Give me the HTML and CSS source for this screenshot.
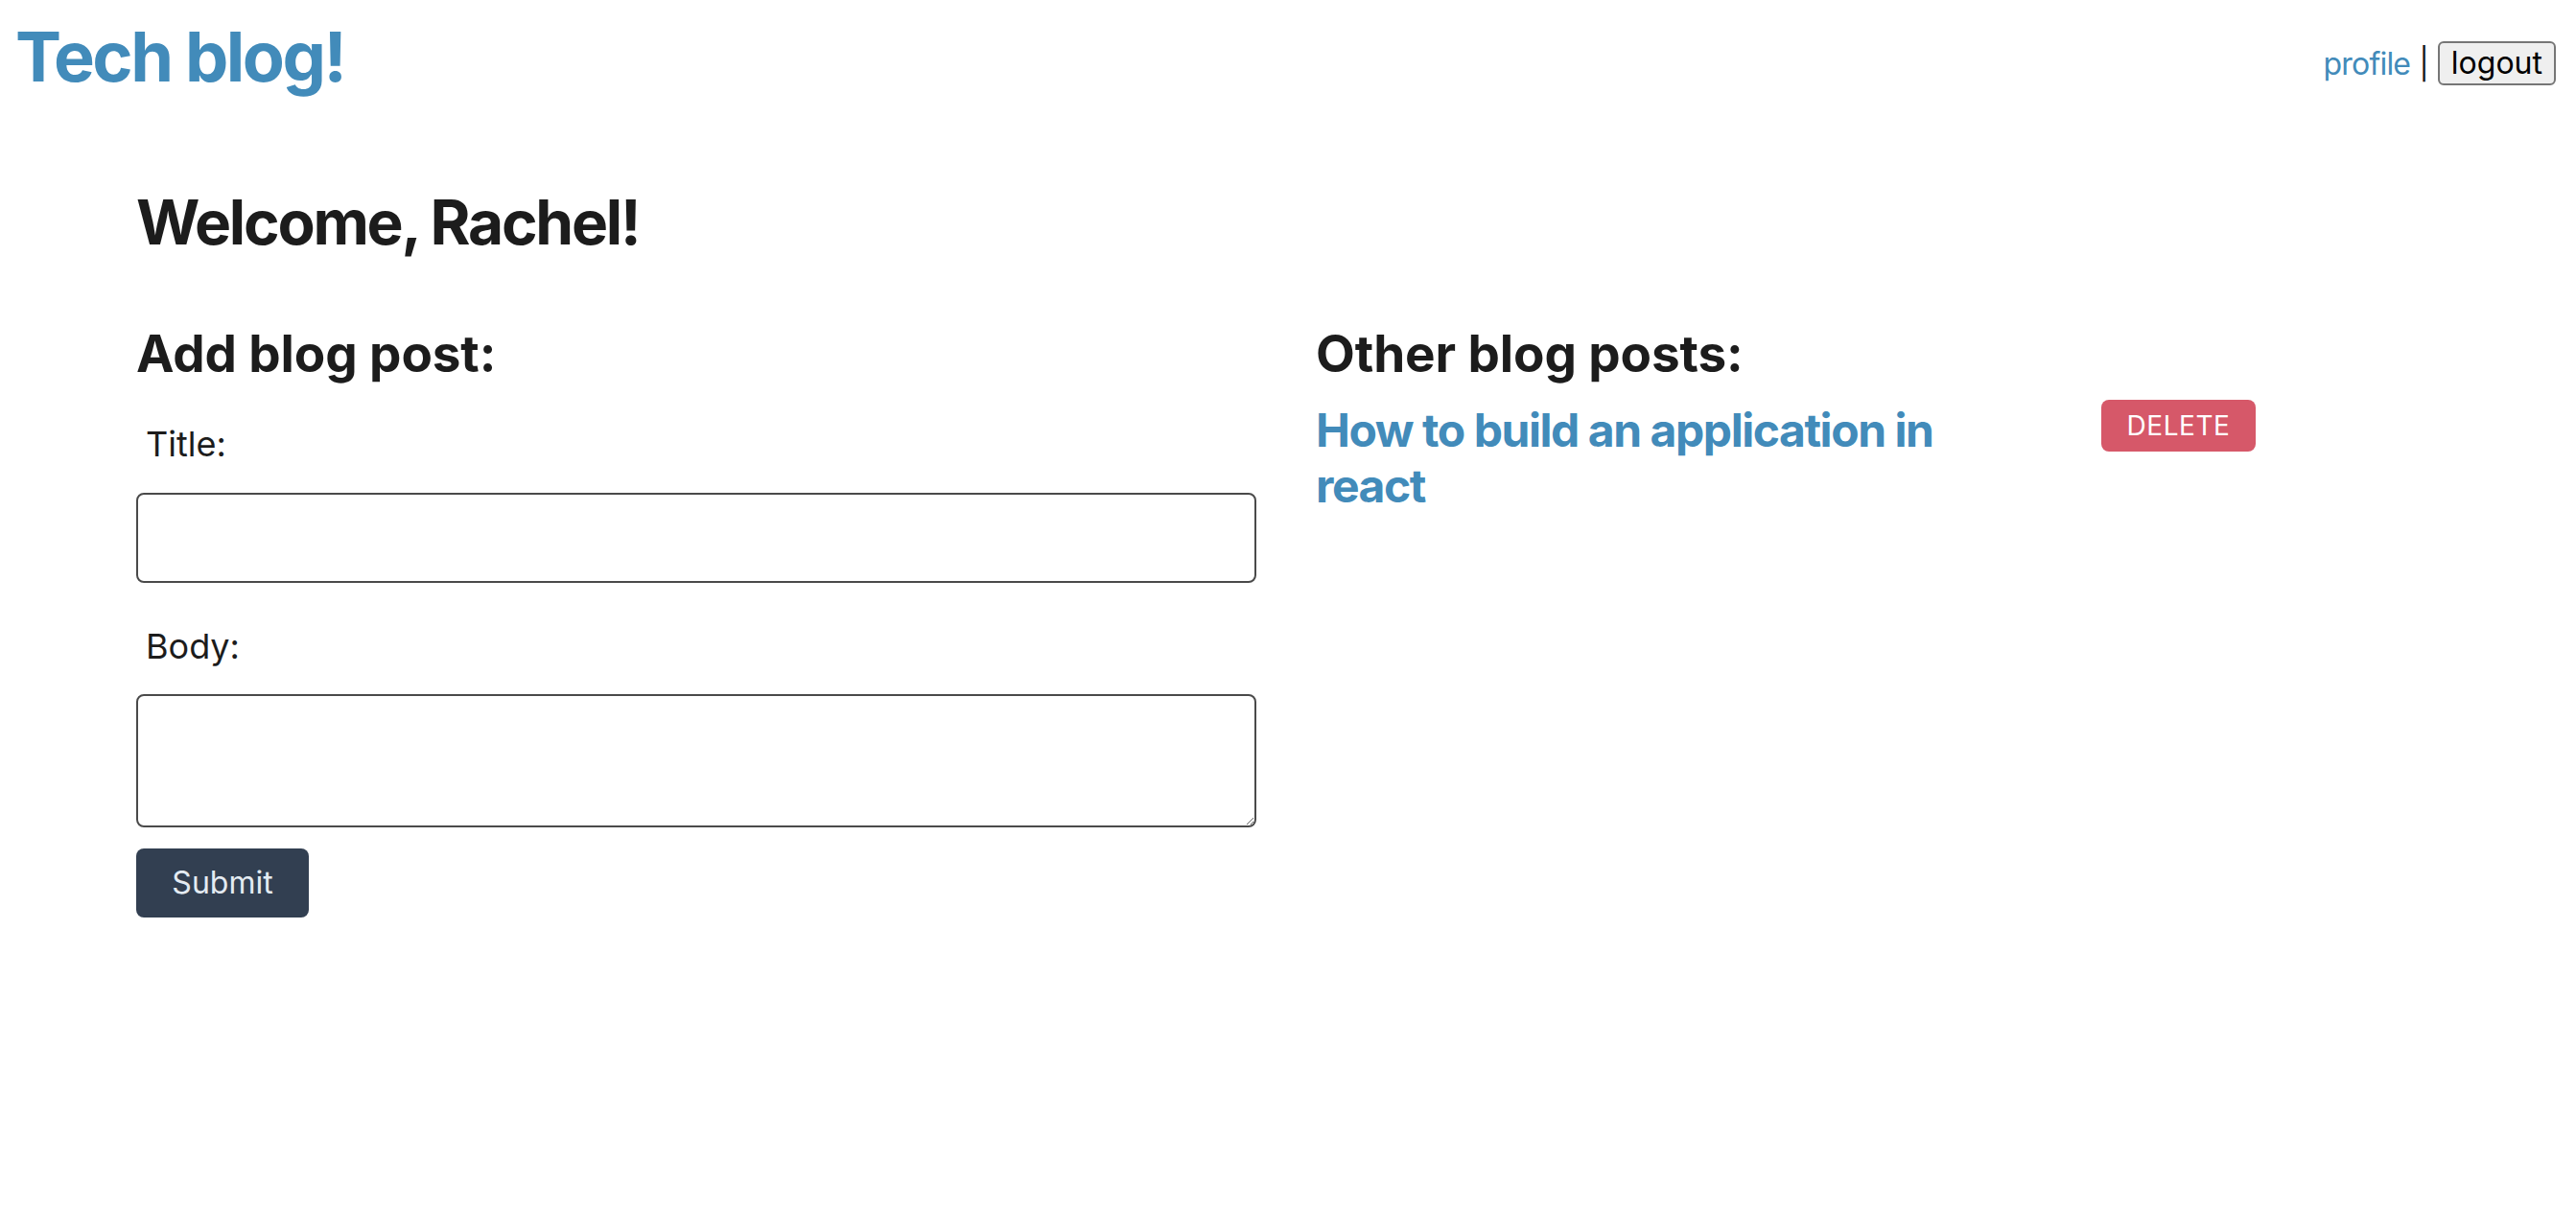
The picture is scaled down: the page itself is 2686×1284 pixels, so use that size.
FILE: index.html
```html
<!DOCTYPE html>
<html lang="en">
<head>
<meta charset="utf-8">
<title>Tech blog!</title>
<link rel="stylesheet" href="styles.css">
</head>
<body>
<header class="site-header">
  <h1 class="brand"><a href="#" class="brand-link">Tech blog!</a></h1>
  <nav class="top-nav">
    <a href="#" class="nav-link">profile</a>
    <span class="nav-sep">|</span>
    <button class="logout-btn" type="button">logout</button>
  </nav>
</header>
<main class="dashboard">
  <h1 class="welcome">Welcome, Rachel!</h1>
  <div class="columns">
    <section class="col">
      <h2 class="section-title">Add blog post:</h2>
      <form class="post-form">
        <label class="field-label" for="title">Title:</label>
        <input class="field-input" id="title" type="text">
        <label class="field-label field-label-body" for="body">Body:</label>
        <textarea class="field-area" id="body"></textarea>
        <button class="submit-btn" type="button">Submit</button>
      </form>
    </section>
    <section class="col">
      <h2 class="section-title">Other blog posts:</h2>
      <div class="post-row">
        <a href="#" class="post-link">How to build an application in react</a>
        <button class="delete-btn" type="button">DELETE</button>
      </div>
    </section>
  </div>
</main>
</body>
</html>
```
FILE: styles.css
```css
* { box-sizing: border-box; }

body {
  margin: 16px;
  font-family: Inter, "Noto Sans", sans-serif;
  color: #1c1c1c;
  background: #ffffff;
}

.site-header {
  display: flex;
  justify-content: space-between;
  align-items: flex-start;
}

.brand {
  margin: 0;
  font-size: 72px;
  font-weight: 700;
  line-height: 1.2;
  letter-spacing: -0.035em;
}

.brand-link {
  color: #428bba;
  text-decoration: none;
}

.top-nav {
  display: flex;
  align-items: center;
  gap: 9px;
  padding-top: 27px;
  margin-right: 5px;
  font-size: 32px;
}

.nav-link {
  color: #428bba;
  text-decoration: none;
  letter-spacing: -0.025em;
}

.nav-sep {
  color: #1a1a1a;
}

.logout-btn {
  font-family: Inter, "Noto Sans", sans-serif;
  font-size: 32px;
  line-height: 38px;
  color: #000;
  background: #efefef;
  border: 2px solid #767676;
  border-radius: 6px;
  padding: 2px 12px;
}

.dashboard {
  padding: 0 126px;
}

.welcome {
  margin: 92px 0 0;
  font-size: 64px;
  font-weight: 700;
  line-height: 1.2;
  letter-spacing: -0.035em;
}

.columns {
  display: grid;
  grid-template-columns: 1168px 1fr;
  column-gap: 62px;
  margin-top: 68px;
}

.section-title {
  margin: 0;
  font-size: 53px;
  font-weight: 700;
  line-height: 1.15;
  letter-spacing: -0.002em;
}

.post-form {
  display: flex;
  flex-direction: column;
  align-items: flex-start;
}

.field-label {
  display: block;
  padding-left: 10px;
  margin-top: 42px;
  margin-bottom: 29px;
  font-size: 36px;
  line-height: 1.2;
  color: #1c1c1c;
}

.field-label-body {
  margin-top: 45px;
  margin-bottom: 27px;
}

.field-input,
.field-area {
  display: block;
  width: 100%;
  border: 2px solid #4a4a4a;
  border-radius: 8px;
  background: #fff;
  font-family: Inter, sans-serif;
  font-size: 32px;
}

.field-input { height: 94px; }

.field-area {
  height: 139px;
  resize: vertical;
  margin-bottom: 22px;
}

.submit-btn {
  width: 180px;
  height: 72px;
  border: none;
  border-radius: 8px;
  background: #323f51;
  color: #e4ebf2;
  font-family: Inter, sans-serif;
  font-size: 32px;
}

.post-row {
  display: flex;
  align-items: flex-start;
  margin-top: 17px;
}

.post-link {
  width: 700px;
  margin-top: 3px;
  font-size: 48px;
  font-weight: 700;
  line-height: 1.2;
  letter-spacing: -0.03em;
  color: #428bba;
  text-decoration: none;
}

.delete-btn {
  margin-left: 119px;
  width: 161px;
  height: 54px;
  border: none;
  border-radius: 8px;
  background: #d65869;
  color: #ffffff;
  font-family: Inter, sans-serif;
  font-size: 28px;
  letter-spacing: 0.02em;
}
```
